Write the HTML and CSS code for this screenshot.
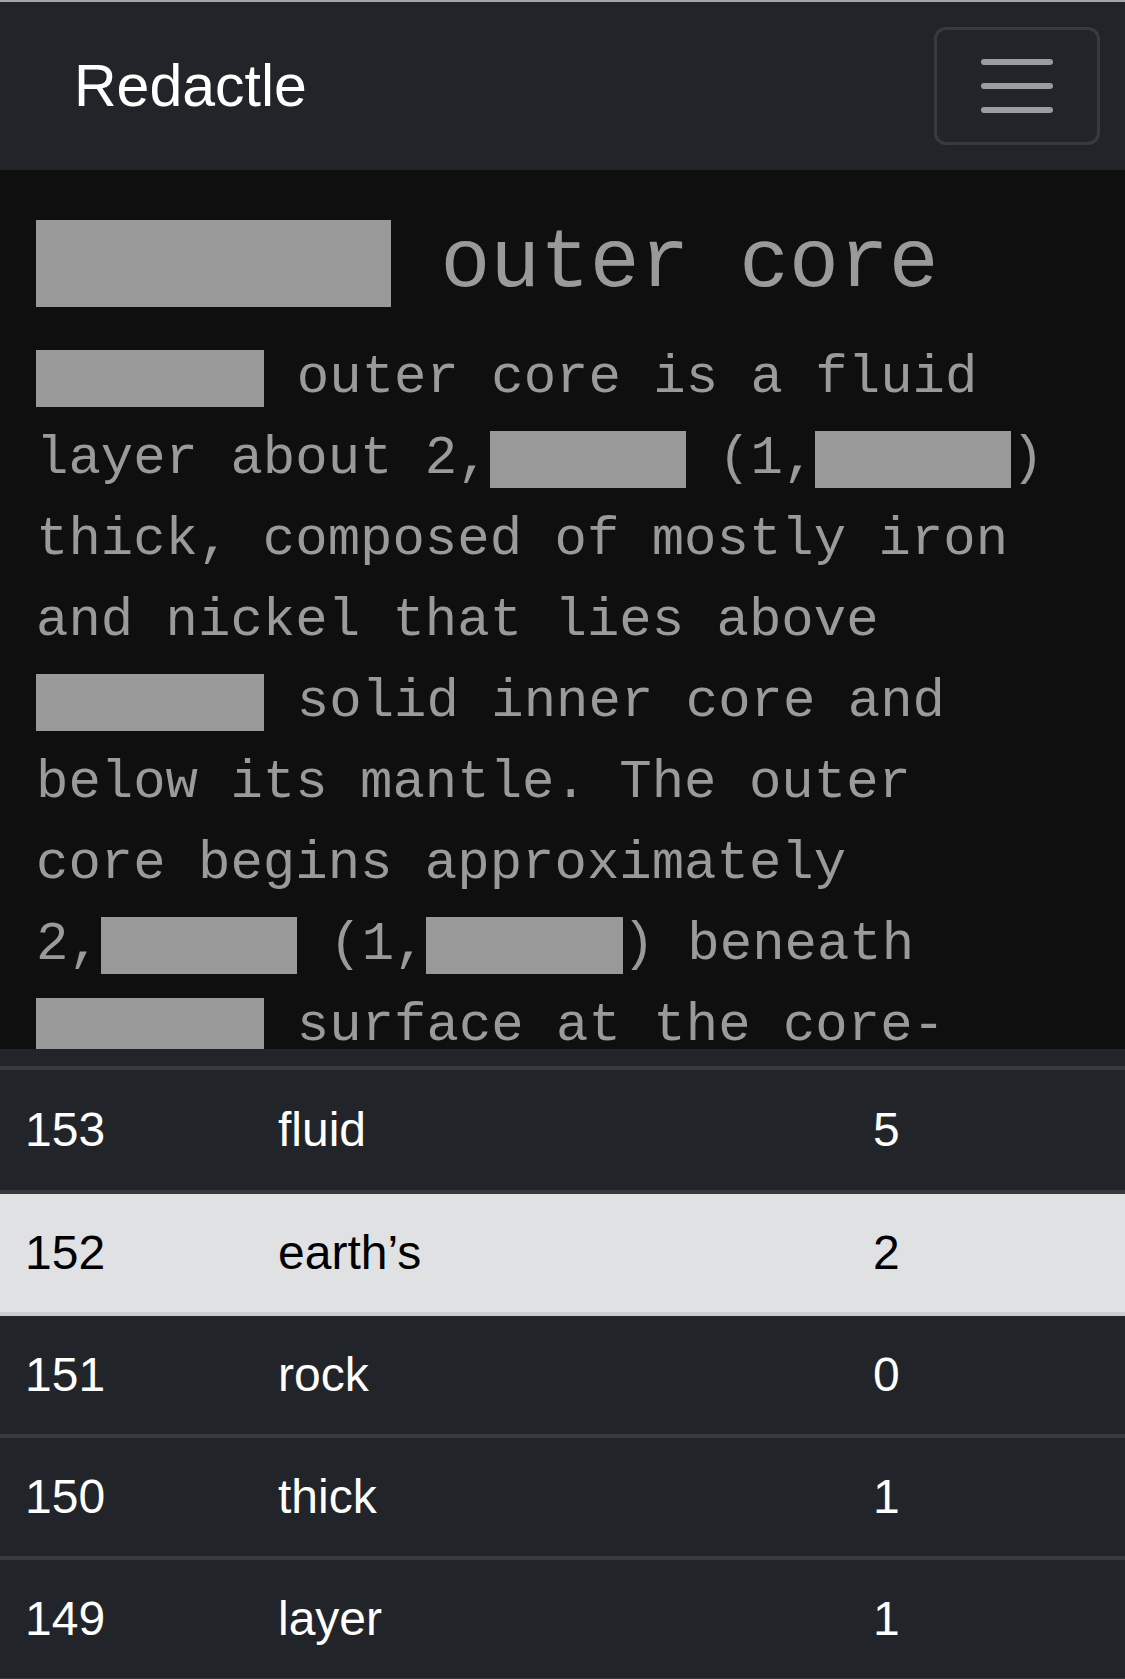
FILE: index.html
```html
<!DOCTYPE html>
<html lang="en">
<head>
<meta charset="utf-8">
<title>Redactle</title>
<link rel="stylesheet" href="styles.css">
</head>
<body>
<div class="topline"></div>
<nav class="navbar">
  <span class="brand">Redactle</span>
  <button class="toggler" type="button" aria-label="Toggle navigation">
    <svg class="toggler-icon" viewBox="0 0 30 30" width="90" height="90" aria-hidden="true">
      <path d="M4 7h22M4 15h22M4 23h22" fill="none" stroke="rgba(255,255,255,0.55)" stroke-width="2" stroke-linecap="round"/>
    </svg>
  </button>
</nav>
<main class="article">
  <h1 class="title"><span class="redact w7t"></span> outer core</h1>
  <p class="body-text"><span class="redact w7"></span> outer core is a fluid<br>layer about 2,<span class="redact w6"></span> (1,<span class="redact w6"></span>)<br>thick, composed of mostly iron<br>and nickel that lies above<br><span class="redact w7"></span> solid inner core and<br>below its mantle. The outer<br>core begins approximately<br>2,<span class="redact w6"></span> (1,<span class="redact w6"></span>) beneath<br><span class="redact w7"></span> surface at the core-</p>
</main>
<section class="guesses">
  <div class="band"></div>
  <table class="guess-table">
    <colgroup><col class="c1"><col class="c2"><col class="c3"></colgroup>
    <tbody>
      <tr><td>153</td><td>fluid</td><td>5</td></tr>
      <tr class="active"><td>152</td><td>earth’s</td><td>2</td></tr>
      <tr><td>151</td><td>rock</td><td>0</td></tr>
      <tr><td>150</td><td>thick</td><td>1</td></tr>
      <tr><td>149</td><td>layer</td><td>1</td></tr>
    </tbody>
  </table>
</section>
</body>
</html>
```
FILE: styles.css
```css
* { box-sizing: border-box; }
html, body { margin: 0; padding: 0; }
body {
  background: #212529;
  font-family: "Liberation Sans", Arial, sans-serif;
  overflow: hidden;
}
.topline { height: 2px; background: #a4a4a4; }
.navbar {
  height: 168px;
  background: #212529;
  display: flex;
  align-items: center;
  justify-content: space-between;
  padding: 0 25px 0 74px;
}
.brand {
  color: #fff;
  font-size: 59px;
  line-height: 1;
}
.toggler {
  width: 166px;
  height: 118px;
  padding: 0;
  margin: 0;
  background: transparent;
  border: 3px solid rgba(255,255,255,0.1);
  border-radius: 12px;
  display: flex;
  align-items: center;
  justify-content: center;
}
.toggler-icon { display: block; }
.article {
  height: 879px;
  overflow: hidden;
  background: #0f0f0f;
  padding: 45px 36px 0;
  color: #9a9a9a;
  font-family: "Liberation Mono", "Courier New", monospace;
}
.title {
  margin: 0 0 22px;
  font-size: 83px;
  line-height: 1.2;
  font-weight: normal;
  white-space: nowrap;
}
.body-text {
  margin: 0;
  font-size: 54px;
  line-height: 81px;
  white-space: nowrap;
}
.redact {
  display: inline-block;
  background: #999;
  height: 1.055em;
  vertical-align: -0.278em;
}
.title .redact { height: 1.048em; vertical-align: -0.253em; }
.w7 { width: 7.05ch; }
.w6 { width: 6.05ch; }
.w7t { width: 7.12ch; }
.guesses { background: #212529; }
.band {
  height: 21px;
  border-bottom: 4px solid #373b3e;
}
.guess-table {
  width: 100%;
  border-collapse: collapse;
  table-layout: fixed;
  font-size: 48px;
  color: #fff;
}
.c1 { width: 253px; }
.c2 { width: 595px; }
.guess-table td {
  height: 122px;
  padding: 0 25px;
  line-height: 118px;
  border-bottom: 4px solid #373b3e;
  vertical-align: middle;
}
.guess-table tr.active td {
  background: #e0e1e3;
  color: #000;
  border-bottom-color: #cdcecf;
}
```
